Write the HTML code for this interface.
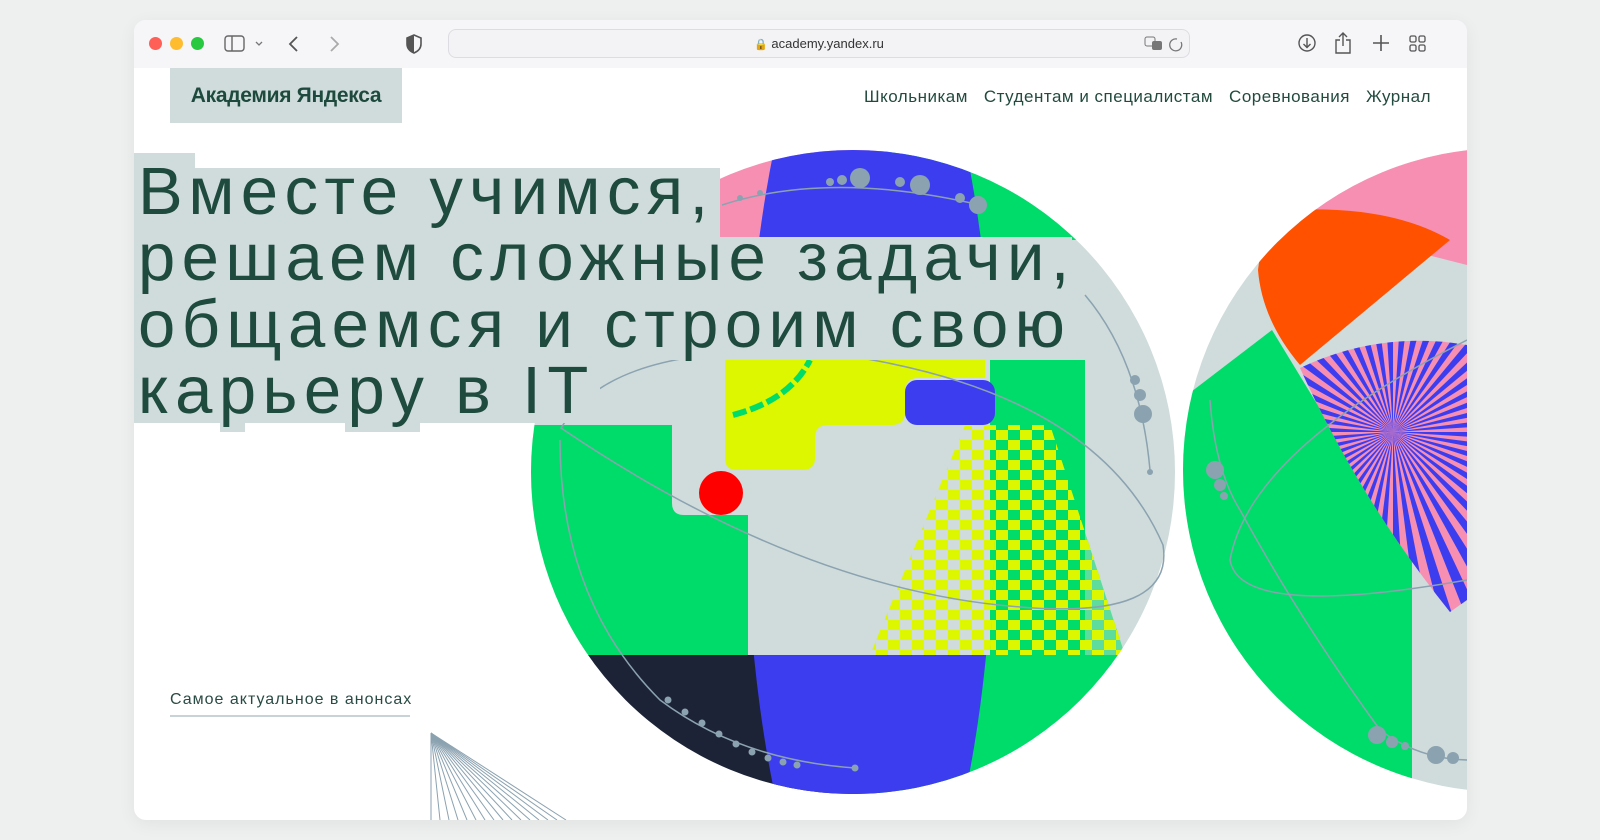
<!DOCTYPE html>
<html><head><meta charset="utf-8"><style>
*{margin:0;padding:0;box-sizing:border-box}
html,body{overflow:hidden;height:840px}
body{width:1600px;height:840px;background:#eef0f0;position:relative;font-family:"Liberation Sans","DejaVu Sans",sans-serif}
#win{position:absolute;left:134px;top:20px;width:1333px;height:800px;background:#fff;border-radius:12px;overflow:hidden;box-shadow:0 4px 18px rgba(0,0,0,.06)}
#tb{position:absolute;left:0;top:0;width:100%;height:48px;background:#f6f6f9;z-index:5}
.dot{position:absolute;top:17px;width:13px;height:13px;border-radius:50%}
#url{position:absolute;left:314px;top:9px;width:742px;height:29px;border:1px solid #dcdce2;border-radius:8px;background:#f3f3f6;font-size:13px;color:#333;text-align:center;line-height:27px}
svg.ic{position:absolute}
#art{position:absolute;left:-134px;top:-20px}
.logo{position:absolute;left:36px;top:48px;width:232px;height:55px;background:#cfdcdb;color:#1e4a3d;font-size:21px;line-height:55px;text-align:center;font-family:"Liberation Sans Narrow","Liberation Sans",sans-serif;font-weight:bold;z-index:3;letter-spacing:-.3px}
.nav{position:absolute;top:67px;right:36px;font-size:17px;color:#234a3f;z-index:3;letter-spacing:.5px}
.nav span{margin-left:16px}
.hl{position:absolute;background:#cfdcdb;z-index:2}
.h{position:absolute;left:4px;color:#1f4a3e;font-size:67px;letter-spacing:6.4px;z-index:3;white-space:nowrap;line-height:66px}
.ann{position:absolute;left:36px;top:671px;font-size:16px;color:#2a4b44;letter-spacing:1px;z-index:3;padding-bottom:6px;border-bottom:2px solid #c7d3d6;width:240px;white-space:nowrap}
</style></head><body>
<div id="win">
<svg id="art" width="1600" height="840" viewBox="0 0 1600 840">
<defs>
<clipPath id="c1"><circle cx="853" cy="472" r="322"/></clipPath>
<clipPath id="c2"><circle cx="1505" cy="470" r="322"/></clipPath>
<clipPath id="topb"><rect x="500" y="140" width="700" height="100"/></clipPath>
<clipPath id="botb"><rect x="500" y="655" width="700" height="200"/></clipPath>
<clipPath id="chk"><path d="M1300,368 Q1380,330 1467,345 L1467,600 L1450,612 Q1360,500 1300,368 Z"/></clipPath>
<pattern id="ck" width="24" height="20" patternUnits="userSpaceOnUse"><rect width="12" height="10" fill="#dcf700"/><rect x="12" y="10" width="12" height="10" fill="#dcf700"/></pattern>
</defs>
<g clip-path="url(#c1)">
<rect x="500" y="140" width="700" height="700" fill="#cfdcdb"/>
<rect x="500" y="140" width="380" height="100" fill="#f78fb3"/>
<rect x="880" y="140" width="320" height="100" fill="#00dc69"/>
<ellipse cx="870" cy="470" rx="125" ry="500" fill="#3d3df0" clip-path="url(#topb)"/>
<rect x="990" y="360" width="95" height="300" fill="#00dc69"/>
<path d="M500,425 H672 V503 Q672,515 684,515 H748 V660 H500 Z" fill="#00dc69"/>
<path d="M725,360 H985 V378 H918 Q905,378 905,392 V412 Q905,425 892,425 H828 Q815,425 815,438 V458 Q815,470 802,470 H737 Q725,470 725,458 Z" fill="#dcf700"/>
<rect x="905" y="380" width="90" height="45" rx="12" fill="#3d3df0"/>
<path d="M733,415 Q790,400 810,360" fill="none" stroke="#00dc69" stroke-width="6" stroke-dasharray="14 4"/>
<path d="M965,425 L1050,425 L1125,655 L870,655 Z" fill="url(#ck)"/>
<path d="M1000,425 L1050,425 L1125,655 L990,655 Z" fill="#00dc69" opacity=".55"/>
<path d="M1000,425 L1050,425 L1125,655 L990,655 Z" fill="url(#ck)"/>
<rect x="500" y="655" width="380" height="200" fill="#1c2337"/>
<rect x="880" y="655" width="320" height="200" fill="#00dc69"/>
<ellipse cx="870" cy="470" rx="125" ry="500" fill="#3d3df0" clip-path="url(#botb)"/>
<circle cx="721" cy="493" r="22" fill="#f00"/>
</g>
<g fill="none" stroke="#8ba2b0" stroke-width="1.5">
<path d="M561,428 Q620,330 867,359 Q1100,400 1163,545 Q1175,620 1020,607 Q800,590 561,428 Z"/>
<path d="M722,205 Q830,170 980,205"/>
<path d="M1085,295 Q1140,360 1150,470"/>
<path d="M560,440 Q560,600 660,700 Q740,760 855,768"/>
</g>
<g fill="#8ba2b0">
<circle cx="860" cy="178" r="10"/><circle cx="842" cy="180" r="5"/><circle cx="830" cy="182" r="4"/><circle cx="920" cy="185" r="10"/><circle cx="900" cy="182" r="5"/><circle cx="960" cy="198" r="5"/><circle cx="978" cy="205" r="9"/><circle cx="760" cy="193" r="3"/><circle cx="740" cy="198" r="3"/>
<circle cx="1135" cy="380" r="5"/><circle cx="1140" cy="395" r="6"/><circle cx="1143" cy="414" r="9"/><circle cx="1150" cy="472" r="3"/>
<circle cx="668" cy="700" r="3.5"/><circle cx="685" cy="712" r="3.5"/><circle cx="702" cy="723" r="3.5"/><circle cx="719" cy="734" r="3.5"/><circle cx="736" cy="744" r="3.5"/><circle cx="752" cy="752" r="3.5"/><circle cx="768" cy="758" r="3.5"/><circle cx="783" cy="762" r="3.5"/><circle cx="797" cy="765" r="3.5"/><circle cx="855" cy="768" r="3.5"/>
</g>
<g clip-path="url(#c2)">
<rect x="1170" y="140" width="330" height="700" fill="#cfdcdb"/>
<path d="M1170,140 H1467 V265 L1270,215 L1170,230 Z" fill="#f78fb3"/>
<path d="M1290,210 Q1390,205 1450,240 L1300,365 Q1262,320 1258,270 Q1262,230 1290,210 Z" fill="#ff5100"/>
<path d="M1170,408 L1272,330 L1412,560 L1412,820 L1170,820 Z" fill="#00dc69"/>
<g clip-path="url(#chk)"><rect x="1290" y="320" width="180" height="300" fill="#f78fb3"/><g id="wedges"></g></g>
<g fill="none" stroke="#8ba2b0" stroke-width="1.5">
<path d="M1467,340 Q1250,450 1230,560 Q1240,620 1467,580"/>
<path d="M1210,400 Q1215,470 1240,510 Q1300,620 1380,730 Q1420,760 1470,760"/>
</g>
<g fill="#8ba2b0"><circle cx="1215" cy="470" r="9"/><circle cx="1220" cy="485" r="6"/><circle cx="1224" cy="496" r="4"/><circle cx="1377" cy="735" r="9"/><circle cx="1392" cy="742" r="6"/><circle cx="1405" cy="746" r="4"/><circle cx="1436" cy="755" r="9"/><circle cx="1453" cy="758" r="6"/></g>
</g>
<g id="fan" stroke="#8ba2b0" stroke-width="1"></g>
</svg>

<div id="tb">
<div class="dot" style="left:15px;background:#fe5f57"></div>
<div class="dot" style="left:36px;background:#febc2e"></div>
<div class="dot" style="left:57px;background:#28c840"></div>
<svg class="ic" style="left:90px;top:15px" width="44" height="18"><rect x="1" y="1" width="19" height="15" rx="3" fill="none" stroke="#666" stroke-width="1.4"/><line x1="8" y1="1" x2="8" y2="16" stroke="#666" stroke-width="1.4"/><path d="M32,7 l3,3 l3,-3" fill="none" stroke="#777" stroke-width="1.3"/></svg>
<svg class="ic" style="left:153px;top:14px" width="60" height="20"><path d="M10,3 l-7,7 l7,7" fill="none" stroke="#555" stroke-width="1.8"/><path d="M44,3 l7,7 l-7,7" fill="none" stroke="#aaa" stroke-width="1.8"/></svg>
<svg class="ic" style="left:272px;top:14px" width="16" height="20"><path d="M8,1 L15,4 V10 Q15,16 8,19 Q1,16 1,10 V4 Z" fill="none" stroke="#555" stroke-width="1.6"/><path d="M8,1 L1,4 V10 Q1,16 8,19 Z" fill="#555"/></svg>
<div id="url"><span style="color:#888;font-size:11px">&#128274;</span> academy.yandex.ru</div>
<svg class="ic" style="left:1010px;top:15px" width="40" height="18"><rect x="1" y="2" width="10" height="9" rx="2" fill="none" stroke="#777"/><rect x="8" y="6" width="10" height="9" rx="2" fill="#777"/><path d="M33,4 a6,6 0 1 0 4,3" fill="none" stroke="#777" stroke-width="1.3"/></svg>
<svg class="ic" style="left:1162px;top:12px" width="160" height="24"><circle cx="11" cy="11" r="8" fill="none" stroke="#555" stroke-width="1.4"/><path d="M11,6 v9 M7.5,12 l3.5,3.5 l3.5,-3.5" fill="none" stroke="#555" stroke-width="1.4"/><path d="M44,8 h-4 v13 h14 v-13 h-4 M47,2 v12 M43,5 l4,-4 l4,4" fill="none" stroke="#555" stroke-width="1.4"/><path d="M85,3 v16 M77,11 h16" stroke="#555" stroke-width="1.6"/><g fill="none" stroke="#555" stroke-width="1.3"><rect x="114" y="4" width="6" height="6" rx="1.5"/><rect x="123" y="4" width="6" height="6" rx="1.5"/><rect x="114" y="13" width="6" height="6" rx="1.5"/><rect x="123" y="13" width="6" height="6" rx="1.5"/></g></svg>
</div>

<div class="logo">Академия Яндекса</div>
<div class="nav">Школьникам<span>Студентам и специалистам</span><span>Соревнования</span><span>Журнал</span></div>

<div class="hl" style="left:0;top:133px;width:61px;height:20px"></div>
<div class="hl" style="left:0;top:148px;width:586px;height:70px"></div>
<div class="hl" style="left:0;top:217px;width:938px;height:70px"></div>
<div class="hl" style="left:0;top:286px;width:938px;height:54px"></div>
<div class="hl" style="left:0;top:339px;width:466px;height:64px"></div>
<div class="hl" style="left:86px;top:400px;width:25px;height:12px"></div>
<div class="hl" style="left:211px;top:400px;width:75px;height:12px"></div>
<div class="h" style="top:139px">Вместе учимся,</div>
<div class="h" style="top:205px">решаем сложные задачи,</div>
<div class="h" style="top:272px">общаемся и строим свою</div>
<div class="h" style="top:338px">карьеру в IT</div>

<div class="ann">Самое актуальное в анонсах</div>
</div>
<script>
var ns="http://www.w3.org/2000/svg",w=document.getElementById("wedges"),cx=1393,cy=432;
for(var i=0;i<50;i++){var a1=i*7.2*Math.PI/180,a2=(i*7.2+3.6)*Math.PI/180,R=400;
var p=document.createElementNS(ns,"path");p.setAttribute("d","M"+cx+","+cy+" L"+(cx+R*Math.cos(a1))+","+(cy+R*Math.sin(a1))+" L"+(cx+R*Math.cos(a2))+","+(cy+R*Math.sin(a2))+"Z");p.setAttribute("fill","#3d3df0");w.appendChild(p);}
var f=document.getElementById("fan");
for(var j=0;j<16;j++){var l=document.createElementNS(ns,"line");l.setAttribute("x1",431);l.setAttribute("y1",733);l.setAttribute("x2",431+j*9);l.setAttribute("y2",820);f.appendChild(l);}
</script>
</body></html>
